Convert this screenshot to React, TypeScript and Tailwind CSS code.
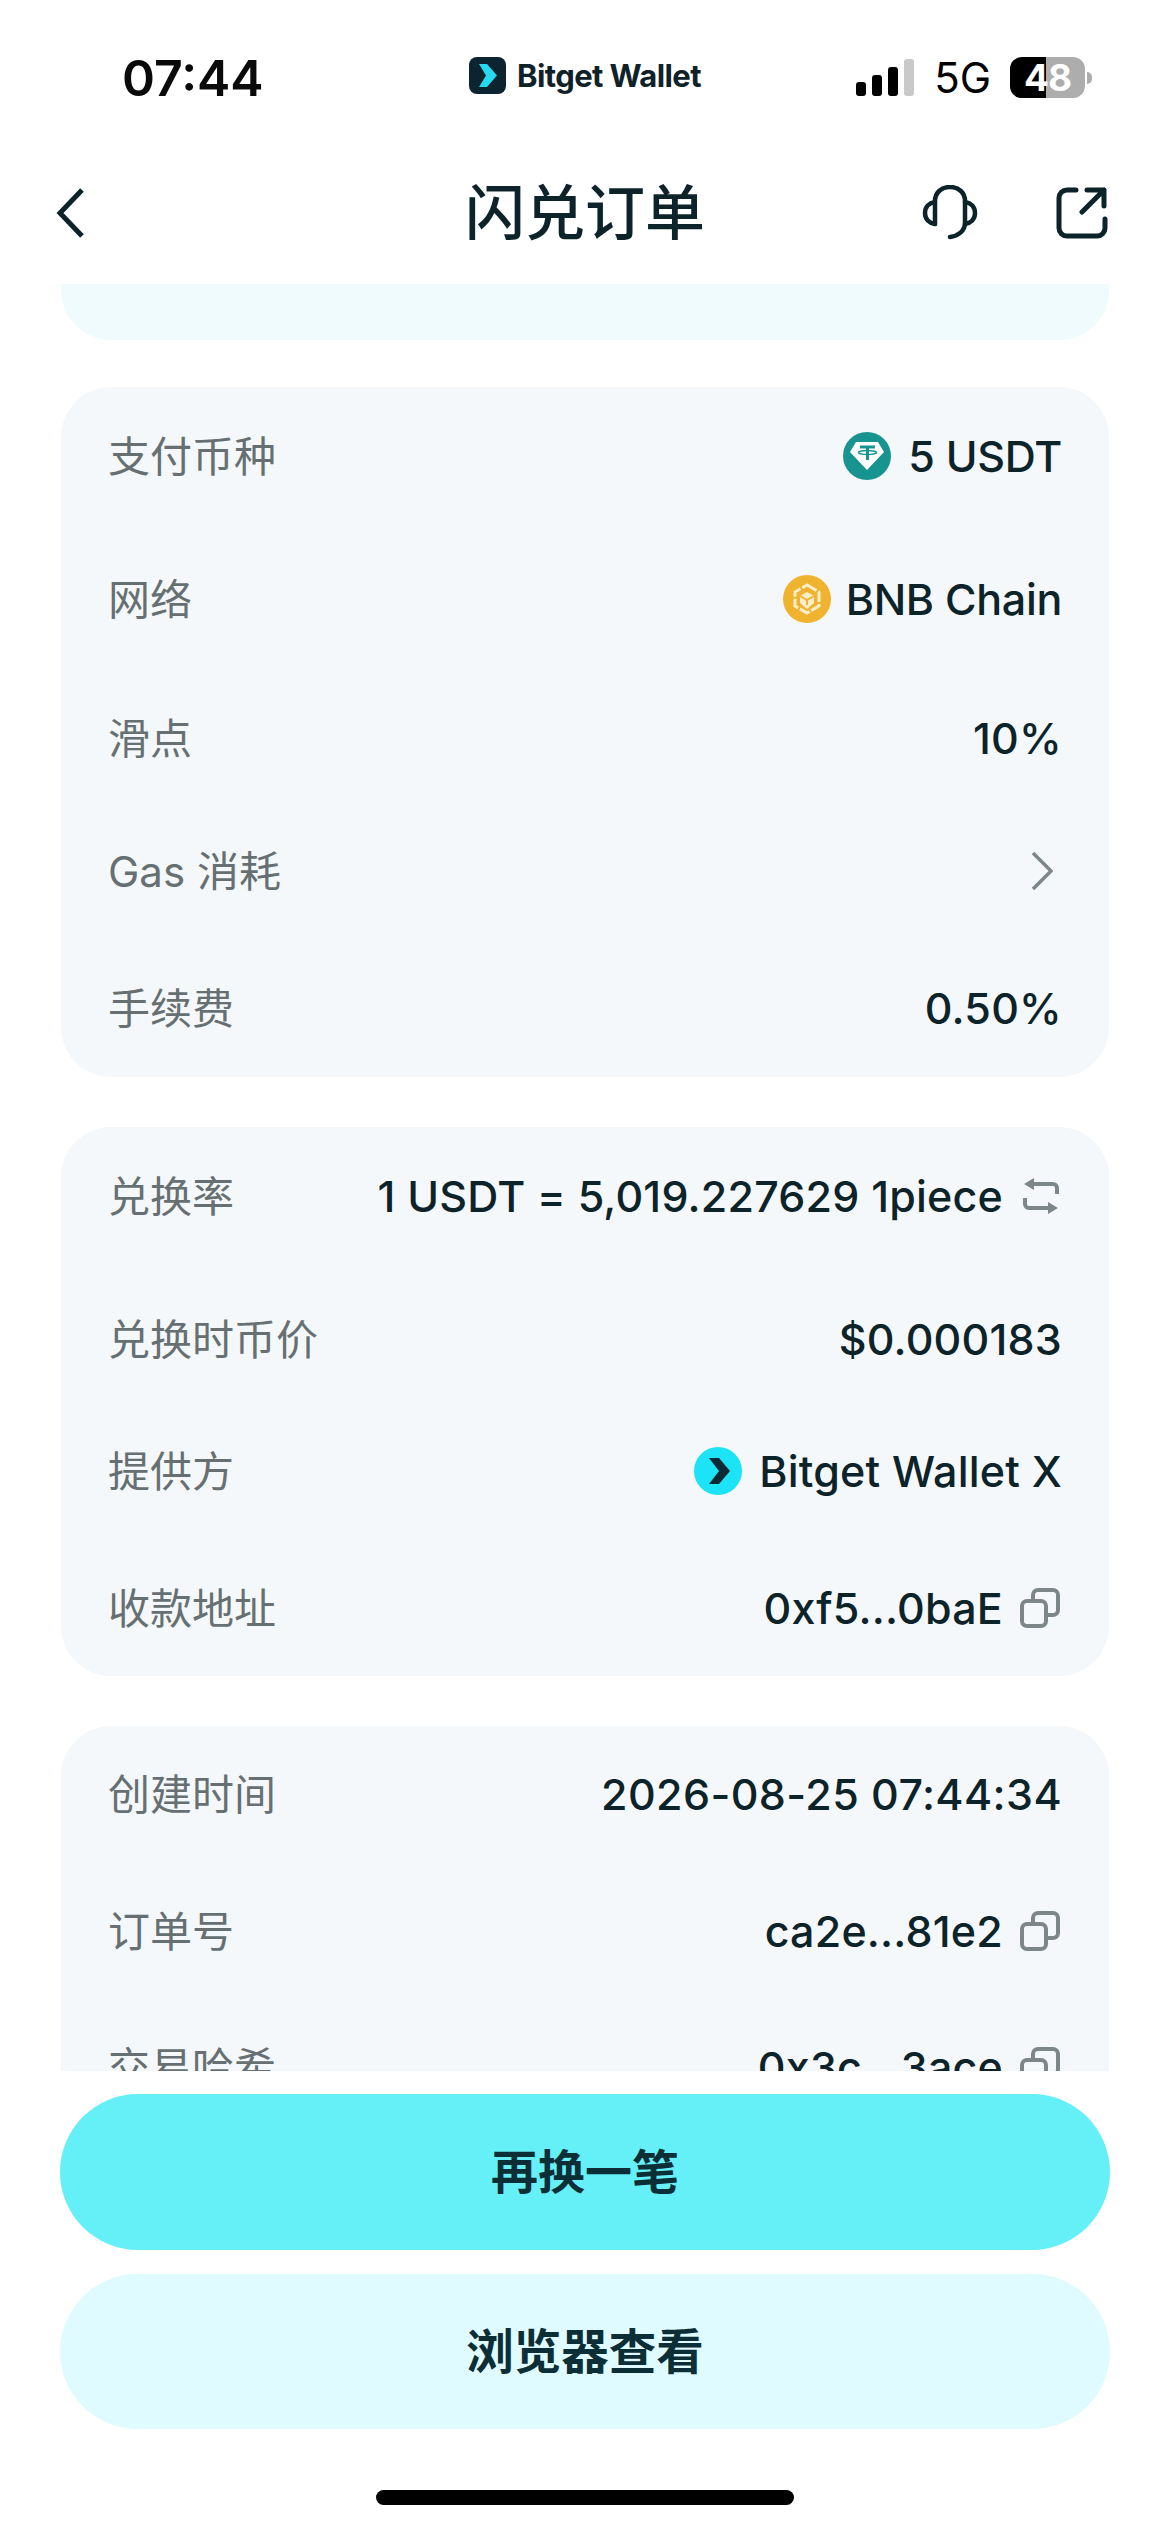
import type { ReactNode } from "react";

const cjk = "font-['Inter','Noto_Sans_CJK_SC',sans-serif]";

function CopyIcon() {
  return (
    <svg width="40" height="40" viewBox="0 0 40 40" fill="none" stroke="#7d8789" strokeWidth="4" className="ml-[17px] mr-[2px] shrink-0">
      <rect x="2" y="13" width="24" height="25" rx="5" />
      <path d="M13 13V7a5 5 0 0 1 5-5h15a5 5 0 0 1 5 5v15a5 5 0 0 1-5 5h-7" />
    </svg>
  );
}

function SwapIcon() {
  return (
    <svg width="36" height="36" viewBox="0 0 36 36" fill="none" className="ml-[20px] mr-[3px] shrink-0">
      <path d="M10 6h20a4 4 0 0 1 4 4v6M26 30H6a4 4 0 0 1-4-4v-6" stroke="#7d8789" strokeWidth="4" />
      <path d="M11 0v12L1 6zM25 24v12l10-6z" fill="#7d8789" />
    </svg>
  );
}

function Tether() {
  return (
    <svg width="48" height="48" viewBox="0 0 48 48" className="mr-[17px] shrink-0">
      <circle cx="24" cy="24" r="24" fill="#17948f" />
      <path d="M13 10h22l6 10-17 18L7 20z" fill="#fff" />
      <path d="M17 15h15M24.500 15v13" fill="none" stroke="#17948f" strokeWidth="3" />
      <ellipse cx="24.500" cy="20.500" rx="9" ry="2" fill="none" stroke="#17948f" strokeWidth="1.500" />
    </svg>
  );
}

function Bnb() {
  return (
    <svg width="48" height="48" viewBox="0 0 48 48" className="mr-[15px] shrink-0">
      <circle cx="24" cy="24" r="24" fill="#f0b32f" />
      <path d="M24 10l12 7v14l-12 7-12-7V17z" fill="none" stroke="#fdeecb" strokeWidth="3" strokeDasharray="11 2" />
      <path d="M24 17l7 4v7l-7 6-7-6v-7z" fill="#fdeecb" />
      <path d="M17 21l7 4 7-4M24 25v5" fill="none" stroke="#f0b32f" strokeWidth="2" />
    </svg>
  );
}

function BitgetRound() {
  return (
    <svg width="48" height="48" viewBox="0 0 48 48" className="mr-[17px] shrink-0">
      <circle cx="24" cy="24" r="24" fill="#1ce3f5" />
      <path d="M15 11h10l11 13-11 13H15l10-13z" fill="#0c2a35" />
    </svg>
  );
}

function Row({ label, children, className = "" }: { label: string; children: ReactNode; className?: string }) {
  return (
    <div className={`flex h-[52px] items-center justify-between ${className}`}>
      <span className="text-[42px] text-[#667073]">{label}</span>
      <span className="flex items-center text-[43px] font-medium tracking-[0.2px] text-[#0c2329]">{children}</span>
    </div>
  );
}

function Card({ children, className = "" }: { children: ReactNode; className?: string }) {
  return <div className={`shrink-0 rounded-[50px] bg-[#f5f8fa] pl-[47px] pr-[47px] ${className}`}>{children}</div>;
}

export default function App() {
  return (
    <div className={`flex h-[2532px] w-[1170px] flex-col overflow-hidden bg-white ${cjk}`}>
      {/* status bar */}
      <div className="grid h-[156px] shrink-0 grid-cols-[1fr_auto_1fr] items-start px-[78px] pt-[51px]">
        <span className="pl-[44px] text-[50px] font-semibold leading-[54px] text-[#0a0a0a]">07:44</span>
        <div className="flex items-center pt-[6px]">
          <svg width="37" height="37" viewBox="0 0 37 37">
            <rect width="37" height="37" rx="8" fill="#0c2430" />
            <path d="M10 7h8l10 11.500-10 11.500h-8l7-11.500z" fill="#25d9ee" />
          </svg>
          <span className="ml-[11px] text-[31px] font-bold leading-[37px] tracking-[-0.6px] text-[#0f2229]">Bitget Wallet</span>
        </div>
        <div className="flex items-center justify-end pt-[6px]">
          <div className="flex h-[37px] items-end gap-[6px]">
            <div className="h-[14px] w-[10px] rounded-[3px] bg-black" />
            <div className="h-[21px] w-[10px] rounded-[3px] bg-black" />
            <div className="h-[29px] w-[10px] rounded-[3px] bg-black" />
            <div className="h-[37px] w-[10px] rounded-[3px] bg-[#c9c9c9]" />
          </div>
          <span className="ml-[20px] text-[42px] leading-[40px] text-black">5G</span>
          <div className="relative ml-[19px] flex h-[41px] w-[75px] items-center justify-center rounded-[12px] bg-[#adadad]">
            <div className="absolute inset-y-0 left-0 w-[36px] rounded-l-[12px] bg-black" />
            <span className="relative text-[37px] font-bold leading-[41px] tracking-[-1px] text-white">48</span>
          </div>
          <div className="ml-[2px] h-[12px] w-[5px] rounded-r-full bg-[#adadad]" />
        </div>
      </div>

      {/* nav */}
      <div className="grid h-[128px] shrink-0 grid-cols-[1fr_auto_1fr] items-center px-[56px] pb-[14px]">
        <svg width="28" height="50" viewBox="0 0 28 50" fill="none" stroke="#0c2329" strokeWidth="5">
          <path d="M26 2L4 25l22 23" />
        </svg>
        <span className="text-[60px] font-medium text-[#0c2329]">闪兑订单</span>
        <div className="flex items-center justify-end gap-[76px] pr-[6px]">
          <svg width="58" height="56" viewBox="0 0 58 56" fill="none" stroke="#0c2329" strokeWidth="4.500" strokeLinecap="round">
            <path d="M13 39V16C13 8 19 2 28 2s15 6 15 14v22c0 8-7 13-15 14" />
            <path d="M13 17C7 18 3 22 3 28s4 10 10 11" />
            <path d="M43 17c6 1 10 5 10 11s-4 10-10 11" />
          </svg>
          <svg width="52" height="52" viewBox="0 0 52 52" fill="none" stroke="#0c2329" strokeWidth="5" strokeLinecap="round" strokeLinejoin="round">
            <path d="M20 3H11a8 8 0 0 0-8 8v30a8 8 0 0 0 8 8h30a8 8 0 0 0 8-8V32" />
            <path d="M26 25L48 3M31 3h17v16" />
          </svg>
        </div>
      </div>

      {/* scrolled content */}
      <div className="flex min-h-0 flex-1 flex-col gap-[50px] overflow-hidden px-[61px]">
        <div className="-mt-[144px] -mb-[3px] h-[200px] shrink-0 rounded-[50px] bg-[#f0fbfd]" />
        <Card className="h-[690px] pt-[43px]">
          <Row label="支付币种"><Tether /><span className="tracking-[-0.3px]">5 USDT</span></Row>
          <Row label="网络" className="mt-[91px]"><Bnb /><span className="tracking-[-0.3px]">BNB Chain</span></Row>
          <Row label="滑点" className="mt-[87px]">10%</Row>
          <Row label="Gas 消耗" className="mt-[81px]">
            <svg width="22" height="40" viewBox="0 0 22 40" fill="none" stroke="#7d8789" strokeWidth="3.500" className="mr-[9px]">
              <path d="M2 2l18 18L2 38" />
            </svg>
          </Row>
          <Row label="手续费" className="mt-[85px]">0.50%</Row>
        </Card>
        <Card className="h-[549px] pt-[43px]">
          <Row label="兑换率">1 USDT = 5,019.227629 1piece<SwapIcon /></Row>
          <Row label="兑换时币价" className="mt-[91px]">$0.000183</Row>
          <Row label="提供方" className="mt-[80px]"><BitgetRound />Bitget Wallet X</Row>
          <Row label="收款地址" className="mt-[85px]">0xf5...0baE<CopyIcon /></Row>
        </Card>
        <Card className="pb-[100px] pt-[42px]">
          <Row label="创建时间"><span className="tracking-[0.4px]">2026-08-25 07:44:34</span></Row>
          <Row label="订单号" className="mt-[85px]">ca2e...81e2<CopyIcon /></Row>
          <Row label="交易哈希" className="mt-[84px]">0x3c...3ace<CopyIcon /></Row>
        </Card>
      </div>

      {/* footer */}
      <div className="flex h-[461px] shrink-0 flex-col items-center px-[60px] pt-[23px]">
        <button className="h-[156px] w-full shrink-0 rounded-full bg-[#65f0f8] text-[47px] font-semibold text-[#0c2f37]">再换一笔</button>
        <button className="mt-[24px] h-[155px] w-full shrink-0 rounded-full bg-[#e0fbff] text-[47.5px] font-semibold text-[#0c2f37]">浏览器查看</button>
        <div className="mt-[61px] h-[15px] w-[418px] rounded-full bg-black" />
      </div>
    </div>
  );
}
